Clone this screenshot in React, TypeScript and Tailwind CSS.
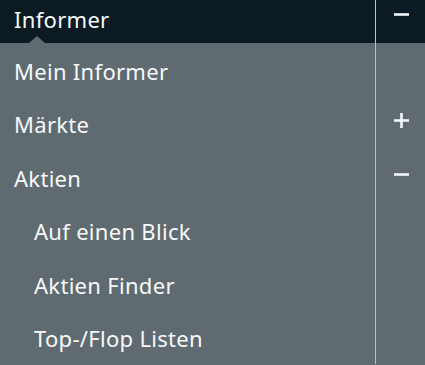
import { ReactNode } from "react";

type Item = {
  label: string;
  level: 0 | 1;
  toggle?: "plus" | "minus";
};

const items: Item[] = [
  { label: "Mein Informer", level: 0 },
  { label: "Märkte", level: 0, toggle: "plus" },
  { label: "Aktien", level: 0, toggle: "minus" },
  { label: "Auf einen Blick", level: 1 },
  { label: "Aktien Finder", level: 1 },
  { label: "Top-/Flop Listen", level: 1 },
];

function Toggle({ kind }: { kind: "plus" | "minus" }) {
  return (
    <svg width="15" height="15" viewBox="0 0 15 15" fill="none">
      <path d="M0 7.5 H15" stroke="#f4f7f8" strokeWidth="2.6" />
      {kind === "plus" && <path d="M7.5 0 V15" stroke="#f4f7f8" strokeWidth="2.6" />}
    </svg>
  );
}

function Row({ children, toggle }: { children: ReactNode; toggle?: "plus" | "minus" }) {
  return (
    <div className="flex h-[53.5px]">
      <div className="flex flex-1 items-center pt-[3px]">{children}</div>
      <div className="flex w-[50px] items-center justify-center border-l border-[#b9c2c6] pb-[5px] pl-[2px]">
        {toggle && <Toggle kind={toggle} />}
      </div>
    </div>
  );
}

export default function App() {
  return (
    <div
      className="h-[365px] w-[425px] overflow-hidden bg-[#5f6b70] text-[22px] font-normal tracking-[0.3px] text-[#f7f9fa]"
      style={{ fontFamily: "'Noto Sans', Lato, sans-serif" }}
    >
      {/* Header */}
      <div className="relative flex h-[43px] bg-[#0c1b23]">
        <div className="flex flex-1 items-center pl-[14px] pb-[5px]">Informer</div>
        <div className="flex w-[50px] items-start justify-center border-l border-[#b9c2c6] pl-[2px] pt-[7px]">
          <Toggle kind="minus" />
        </div>
        <div className="absolute bottom-0 left-[29px] h-0 w-0 border-x-[8px] border-b-[7px] border-x-transparent border-b-[#5f6b70]" />
      </div>

      {items.map((item) => (
        <Row key={item.label} toggle={item.toggle}>
          <span className={item.level === 1 ? "pl-[34px]" : "pl-[14px]"}>{item.label}</span>
        </Row>
      ))}
    </div>
  );
}
